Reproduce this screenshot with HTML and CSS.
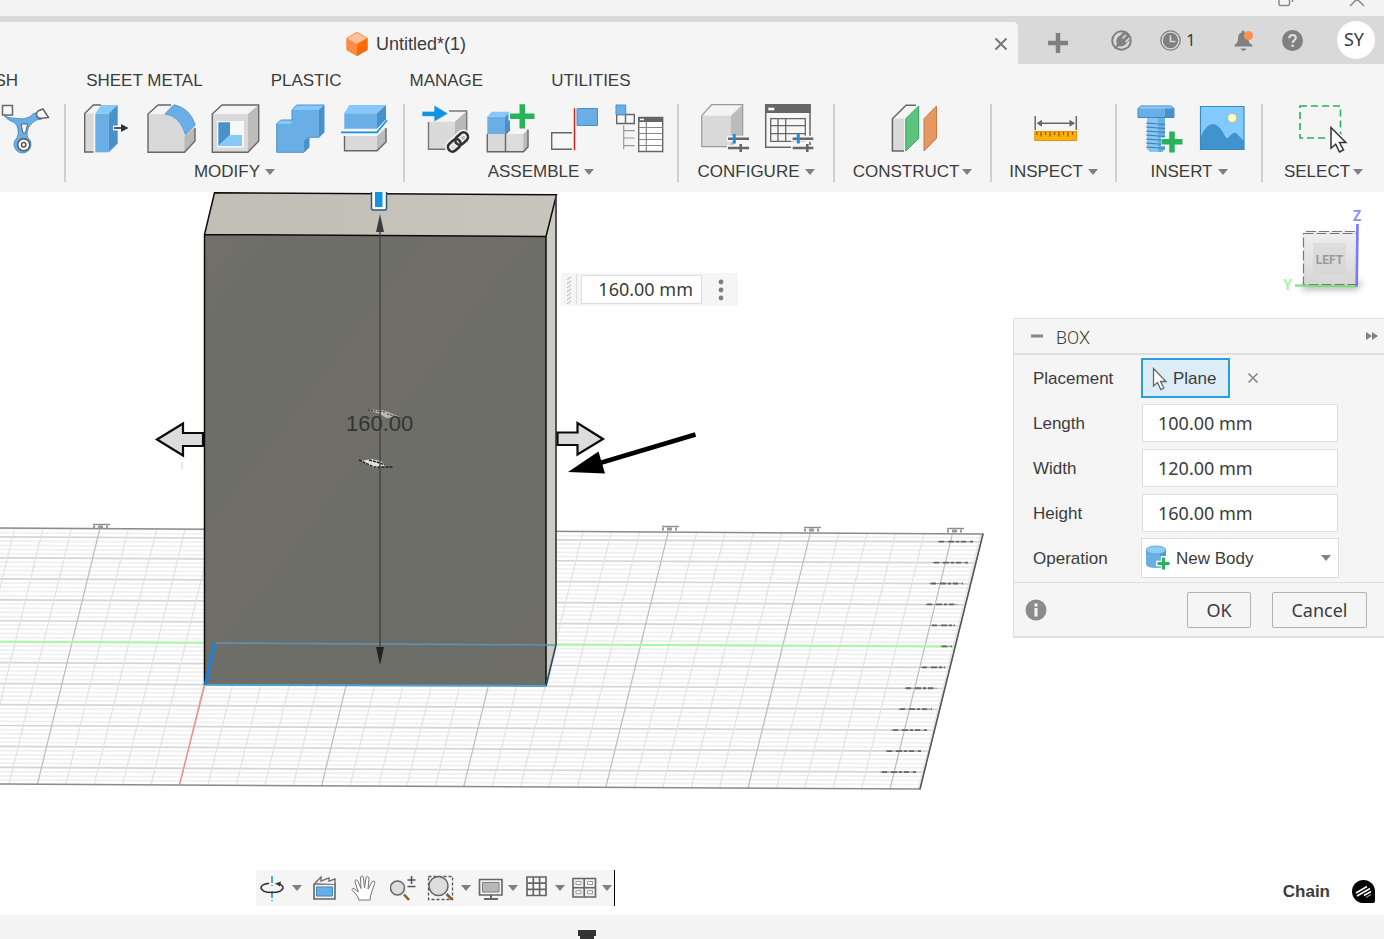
FILE: index.html
```html
<!DOCTYPE html>
<html lang="en">
<head>
<meta charset="utf-8">
<title>Untitled*(1)</title>
<link rel="stylesheet" href="styles.css">
</head>
<body>
<header class="titlebar">
  <button class="win-btn" aria-label="Restore"><svg width="18" height="8" viewBox="0 0 18 8"><path d="M2 0v4q0 1.500 1.500 1.500h7.500q1.500 0 1.500-1.500V0M15.500 0v2" fill="none" stroke="#8a8a8a" stroke-width="1.500"/></svg></button>
  <button class="win-btn" aria-label="Close window"><svg width="18" height="8" viewBox="0 0 18 8"><path d="M2 6 9-1 16 6" fill="none" stroke="#8a8a8a" stroke-width="1.500"/></svg></button>
</header>

<div class="tabstrip">
  <div class="doc-tab">
    <svg width="22" height="24" viewBox="0 0 22 24"><path d="M11 0 21.500 6v12L11 24 .5 18V6z" fill="#ff8b45"/><path d="M11 0 21.500 6 11 12 .5 6z" fill="#ffc199"/><path d="M21.500 6v12L11 24V12z" fill="#ff6b00"/><path d="M11 .5 21 6v12l-10 5.500L1 18V6z" fill="none" stroke="#d9793f" stroke-opacity=".5"/></svg>
    <span class="doc-title">Untitled*(1)</span>
    <button class="tab-close" aria-label="Close tab"><svg width="14" height="14" viewBox="0 0 14 14"><path d="M1.500 1.500l11 11M12.500 1.500l-11 11" stroke="#777" stroke-width="2"/></svg></button>
  </div>
  <div class="strip-tools">
    <button class="new-tab" aria-label="New tab"><svg width="20" height="20" viewBox="0 0 20 20"><path d="M10 0v20M0 10h20" stroke="#808080" stroke-width="4.500"/></svg></button>
    <button aria-label="Extensions"><svg width="21" height="21" viewBox="0 0 21 21"><path d="M4 17.300A9.300 9.300 0 1 1 17 17.300Q10.500 22 4 17.300" fill="none" stroke="#808080" stroke-width="2"/><path d="M3 18 6 14.500Q4 10 7.500 6.500L10 4.500 17 11.500l-2.500 3q-3.500 3-7 1.500L5 19z" fill="#808080"/><path d="M10 4.500Q14-1 18 4t-1 7.500z" fill="#808080"/><path d="M11.500 8.500 15 5M14.500 12l4-4" stroke="#d9d9d9" stroke-width="1.700"/></svg></button>
    <button class="jobs" aria-label="Job status"><svg width="21" height="21" viewBox="0 0 21 21"><circle cx="10.500" cy="10.500" r="9.700" fill="none" stroke="#808080" stroke-width="1.300"/><circle cx="10.500" cy="10.500" r="7.700" fill="#808080"/><path d="M10.500 5.500v6h5" fill="none" stroke="#d9d9d9" stroke-width="1.600"/></svg><span>1</span></button>
    <button aria-label="Notifications"><svg width="20" height="21" viewBox="0 0 20 21"><path d="M9 .5q1.500 0 1.500 2 4 1.500 4 6.500 0 4.500 4 6v1.500H.5V15q3.500-2 3.500-6.500Q4 3.500 7.500 2.500 7.500.5 9 .5M6.500 18.500h6q-1 2.300-3 2.300t-3-2.300" fill="#808080"/><circle cx="14.500" cy="5.500" r="4.500" fill="#ff9150"/></svg></button>
    <button aria-label="Help"><svg width="21" height="21" viewBox="0 0 21 21"><circle cx="10.500" cy="10.500" r="10.500" fill="#808080"/><path d="M7.200 8.200q.2-3.200 3.400-3.200 3.200.1 3.200 2.800 0 1.500-1.600 2.500-1.500 1-1.500 2.700" fill="none" stroke="#e2e2e2" stroke-width="2"/><circle cx="10.600" cy="15.800" r="1.300" fill="#e2e2e2"/></svg></button>
    <button class="avatar">SY</button>
  </div>
</div>

<div class="ribbon">
  <nav class="ribbon-tabs">
    <a href="#mesh">MESH</a><a href="#sheet">SHEET METAL</a><a href="#plastic">PLASTIC</a><a href="#manage">MANAGE</a><a href="#utilities">UTILITIES</a>
  </nav>
  <div class="ribbon-groups">
    <section class="group group-first">
      <div class="icons">
        <button aria-label="Generative"><svg class="ico" viewBox="0 0 48 50"><path d="M3 8q1 5 8 6 8 .5 12 1 7-1 10-5l5-2 4 7q-6 0-10 4-5 5-5 10 0 3 1 5a8.500 8.500 0 1 1-11 0q2-4 1-9-1-6-7-8-7-3-8-9z" fill="#69aee5" stroke="#4d94cb"/><path d="M21 20h6.500l-2 9h-2.500z" fill="#f5f5f5" stroke="#666"/><path d="M2.500 1.500h10v9.500h-10z" fill="#f7f7f7" stroke="#666" stroke-width="1.500"/><path d="m43 5 5.500 8.500-6 .7q-5 .8-6-3-.5-2.700 1.500-4.200z" fill="#f7f7f7" stroke="#666" stroke-width="1.500"/><circle cx="23.700" cy="40.700" r="6" fill="#fff" stroke="#555" stroke-width="1.500"/><circle cx="23.700" cy="40.700" r="2.200" fill="#fff" stroke="#555" stroke-width="1.500"/></svg></button>
      </div>
    </section>
    <section class="group">
      <div class="icons">
        <button aria-label="Press Pull"><svg class="ico" viewBox="0 0 48 50"><path d="M1.700 48V9.500L10.300 1H18l-7.500 8.500V48z" fill="#d9d9d9"/><path d="M1.700 9.500 10.300 1H18l-7.500 8.500z" fill="#f3f3f3"/><path d="M10.500 48H1.700V9.500L10.300 1H18" fill="none" stroke="#666" stroke-width="1.400"/><path d="M12.300 9.500h13.400v38.800H12.300z" fill="#69aee5"/><path d="M12.300 9.500 18.300 1h16.400l-9 8.500z" fill="#86c8fa"/><path d="m25.700 9.500 9-8.500v38.500l-9 8.800z" fill="#4891cb"/><path d="M30 24h8" stroke="#f5f5f5" stroke-width="5"/><path d="M31 24h9" stroke="#333" stroke-width="1.600"/><path d="m38 20 7.500 4-7.500 4z" fill="#333"/></svg></button>
        <button aria-label="Fillet"><svg class="ico" viewBox="0 0 48 50"><path d="M1 48.300V10L11 1h15l-9 9q16 2 20.500 21L48 23v13.500L37.500 48.300z" fill="#d9d9d9"/><path d="M1 10 11 1h14l-8.500 9z" fill="#f4f4f4"/><path d="m37.500 32 10.500-9v13.500L37.500 48.300z" fill="#b9b9b9"/><path d="M24 1H11L1 10v38.300h36.500L48 37V24" fill="none" stroke="#666" stroke-width="1.400"/><path d="M18 10 27 .7Q43 4 48.300 21l-10 9.500Q33 12 18 10z" fill="#69aee5" stroke="#4d94cb" stroke-width=".8"/></svg></button>
        <button aria-label="Shell"><svg class="ico" viewBox="0 0 48 50"><path d="M1.300 10 11 1h36.700v36L37 48.300H1.300z" fill="#d9d9d9"/><path d="M1.300 10 11 1h36.700L37 10z" fill="#f4f4f4"/><path d="m37 10 10.700-9v36L37 48.300z" fill="#bcbcbc"/><path d="M1.300 10 11 1h36.700v36L37 48.300H1.300z" fill="none" stroke="#666" stroke-width="1.400"/><path d="M6 17h27v26.500H6z" fill="#f8f8f8"/><path d="M7.300 18.300H19V31L7.300 42z" fill="#4891cb"/><path d="M7.300 42 19 31h12v11z" fill="#86c8fa"/></svg></button>
        <button aria-label="Combine"><svg class="ico" viewBox="0 0 48 50"><path d="M1.700 48.300V20l4-4H17V6l4.700-5H49v27.300l-5 5H34v10l-5 5z" fill="#69aee5"/><path d="m1.700 20 4-4H17l-1 4zM17 6l4.700-5H49l-5 5z" fill="#86c8fa"/><path d="m44 6 5-5v27.300l-5 5zM29 37l5-4v10.300l-5 5z" fill="#4891cb"/><path d="M1.700 48.300V20l4-4H17V6l4.700-5H49v27.300l-5 5H34v10l-5 5z" fill="none" stroke="#4d94cb"/></svg></button>
        <button aria-label="Split Body"><svg class="ico" viewBox="0 0 48 50"><path d="M5.300 9.300H38v15.400H5.300z" fill="#69aee5"/><path d="m5.300 9.300 5-8.300H47l-9 8.300z" fill="#86c8fa"/><path d="m38 9.300 9-8.300v14.300l-9 9.400z" fill="#4891cb"/><path d="M5.300 32H38v15H5.300z" fill="#d9d9d9"/><path d="m38 32 9-8.500V38l-9 9z" fill="#bbb"/><path d="M5.500 32v14.800H38l9-8.800V24" fill="none" stroke="#666" stroke-width="1.400"/><path d="M2 28.300h36l10-12" fill="none" stroke="#1493e2" stroke-width="1.700"/></svg></button>
      </div>
      <button class="group-label">MODIFY<i class="caret"></i></button>
    </section>
    <section class="group">
      <div class="icons">
        <button aria-label="Insert Component"><svg class="ico" viewBox="0 0 48 50"><path d="M7.500 17.700 18 7h28v27.500L34 45.300H7.500z" fill="#dadada"/><path d="M7.500 17.700 18 7h28L34 17.700z" fill="#f4f4f4"/><path d="m34 17.700 12-10.700v27.500L34 45.300z" fill="#b8b8b8"/><path d="M7.500 18v27.300H30M28 7h17.700v21" fill="none" stroke="#777" stroke-width="1.400"/><path d="M1 7.300h12V1l14.300 8.500L13 18v-5.500H1z" fill="#1493e2" stroke="#f5f5f5" stroke-width=".7"/><g fill="none" stroke="#f5f5f5" stroke-width="6"><rect x="34" y="30" width="14" height="9.500" rx="4.700" transform="rotate(-43 41 35)"/><rect x="26" y="37" width="14" height="9.500" rx="4.700" transform="rotate(-43 33 41)"/></g><g fill="none" stroke="#333" stroke-width="2.700"><rect x="34" y="30" width="14" height="9" rx="4.500" transform="rotate(-43 41 35)"/><rect x="26" y="37" width="14" height="9" rx="4.500" transform="rotate(-43 33 41)"/></g></svg></button>
        <button aria-label="New Component"><svg class="ico" viewBox="0 0 48 50"><path d="M2.300 30H20v17.700H2.300z" fill="#d9d9d9"/><path d="M20.700 30 25 25.300h18V43l-4.700 4.700H20.700z" fill="#dcdcdc"/><path d="m20.700 30 4.300-4.700h18L38.300 30z" fill="#f5f5f5"/><path d="m38.300 30 4.700-4.700V43l-4.700 4.700z" fill="#bbb"/><path d="M2.300 30v17.700h36L43 43V25.500M20.500 30v17.700M20.500 30l4.500-4.500" fill="none" stroke="#666" stroke-width="1.400"/><path d="M2.300 12.700H20V30H2.300z" fill="#69aee5"/><path d="m2.300 12.700 4.400-5H25l-5 5z" fill="#86c8fa"/><path d="m20 12.700 5-5V25l-5 5z" fill="#4891cb"/><path d="M37.300-1v27M23.500 12.500h27" stroke="#f5f5f5" stroke-width="8"/><path d="M37.300.3v24.300M25 12.300h24.500" stroke="#27b35a" stroke-width="5.600"/></svg></button>
        <button aria-label="Joint"><svg class="ico" viewBox="0 0 48 50"><path d="M23 28.700H2.700v16.600H23" fill="#f7f7f7" stroke="#666" stroke-width="1.400"/><path d="M25.500 4.300v42" stroke="#cf2222" stroke-width="1.500"/><path d="M28 4.500h20.500v17H28z" fill="#69aee5" stroke="#4c91c6"/></svg></button>
        <button aria-label="Bill of Materials"><svg class="ico" viewBox="0 0 48 50"><path d="M3.700 10.500h17.600v9H3.700zM12.500 10.500v9" fill="#f7f7f7" stroke="#666" stroke-width="1.400"/><path d="M3 1h9.700v9.700H3z" fill="#69aee5" stroke="#4c91c6"/><path d="M10.700 21.300v24M10.700 26.700h11M10.700 34h11M10.700 41.700h11" stroke="#999" stroke-width="1.200" fill="none"/><path d="M25.700 13.500h24v34h-24z" fill="#fff" stroke="#666" stroke-width="1.400"/><path d="M25.700 13h24v5h-24z" fill="#666"/><path d="M27 15.500h4" stroke="#fff" stroke-width="1.500"/><path d="M33.300 18v29M26 23.500h24M26 29.500h24M26 35.500h24M26 41.500h24" stroke="#888" stroke-width="1.200"/></svg></button>
      </div>
      <button class="group-label">ASSEMBLE<i class="caret"></i></button>
    </section>
    <section class="group">
      <div class="icons">
        <button aria-label="Configure"><svg class="ico" viewBox="0 0 48 50"><path d="M1.700 11.700 11.700.7h31v31L31 42.700H1.700z" fill="#d9d9d9"/><path d="m1.700 11.700 10-11h31L31 11.700z" fill="#f3f3f3"/><path d="m31 11.700 11.700-11v31L31 42.700z" fill="#bcbcbc"/><path d="m1.700 11.700 10-11h31v31M1.700 11.700v31H30" fill="none" stroke="#999" stroke-width="1.200"/><path d="M27 34.700h22M27 44h22" stroke="#f5f5f5" stroke-width="6"/><path d="M28 34.700h21M28 44h21" stroke="#666" stroke-width="2.600"/><path d="M34.300 30v9.500" stroke="#1493e2" stroke-width="3"/><path d="M40.700 40v8" stroke="#666" stroke-width="2.600"/></svg></button>
        <button aria-label="Configuration Table"><svg class="ico" viewBox="0 0 48 50"><path d="M1.700.7H46v42.600H1.700z" fill="#f7f7f7" stroke="#666" stroke-width="1.500"/><path d="M1 0h45.500v9H1z" fill="#666"/><path d="M4.300 3.700h6v2.600h-6z" fill="#fff"/><path d="M6.700 14.700h34.600v22.600H6.700zM14 14.700v22.600M21.700 14.700v22.600M6.700 21.700h34.600M6.700 29.700h34.600" fill="none" stroke="#666" stroke-width="1.300"/><path d="M27 34.700h23M27 44h23" stroke="#f5f5f5" stroke-width="6"/><path d="M28.700 34.700h20.600M28.700 44h20.600" stroke="#666" stroke-width="2.600"/><path d="M34.300 30v9.500" stroke="#1493e2" stroke-width="3"/><path d="M43.300 40v8" stroke="#666" stroke-width="2.600"/></svg></button>
      </div>
      <button class="group-label">CONFIGURE<i class="caret"></i></button>
    </section>
    <section class="group">
      <div class="icons">
        <button aria-label="Offset Plane"><svg class="ico" viewBox="0 0 48 50"><path d="M3.400 14.700 17 1.300h11L15 14.700V47H3.400z" fill="#f4f4f4"/><path d="M3.400 14.700H15V47H3.400z" fill="#d9d9d9"/><path d="M15 47H3.400V14.700L17 1.300h10" fill="none" stroke="#666" stroke-width="1.500"/><path d="M16.800 14.700 29.700 2v32.300L16.800 47z" fill="#5bc580" stroke="#3a9d5f"/><path d="M35 14.700 47.500 2v32.300L35 47z" fill="#e79862" stroke="#c37a45"/></svg></button>
      </div>
      <button class="group-label group-label--tight">CONSTRUCT<i class="caret"></i></button>
    </section>
    <section class="group">
      <div class="icons">
        <button aria-label="Measure"><svg class="ico" viewBox="0 0 48 50"><path d="M5.200 12v14M46.300 12v14M8 19.300h36" stroke="#666" stroke-width="1.500"/><path d="m6.500 19.300 5.500-3.500v7zM45 19.300l-5.500-3.500v7z" fill="#666"/><path d="M4.700 27.500h42v9h-42z" fill="#ffb000" stroke="#dd9412"/><path d="M7 28v3M11 28v4.500M15.500 28v3M20 28v4.500M24.500 28v3M29 28v4.500M33.500 28v3M38 28v4.500M42.500 28v3" stroke="#7d5a10" stroke-width="1.200"/></svg></button>
      </div>
      <button class="group-label">INSPECT<i class="caret"></i></button>
    </section>
    <section class="group">
      <div class="icons">
        <button aria-label="Insert Fastener"><svg class="ico" viewBox="0 0 48 50"><path d="M14 12h18v33l-3 3H17l-3-3z" fill="#86c4f2"/><path d="M25 12h7v33l-3 3h-4z" fill="#6baee0"/><path d="m13 19 19 1.500M13 23l19 1.500M13 27l19 1.500M13 31l19 1.500M13 35l19 1.500M13 39l19 1.500M13 43l19 1.500" stroke="#397fb3" stroke-width="1.200"/><path d="M5 4.500 8 2h30l3 2.500v9H5z" fill="#69aee5" stroke="#3e87be"/><path d="M32 3h6l2.500 2v8H32z" fill="#4891cb"/><path d="M6 4.500 8 2.500h30l2 2z" fill="#8accfa"/><path d="M39 26v23M28 37.700h22" stroke="#f5f5f5" stroke-width="8.500"/><path d="M39 27.500v21M28.500 37.700h21" stroke="#27b35a" stroke-width="5.500"/></svg></button>
        <button aria-label="Canvas"><svg class="ico" viewBox="0 0 48 50"><path d="M3.500 2.500h43.500v43h-43.500z" fill="#82cafd"/><path d="M3.500 33Q9 20 16 20q6 0 12 12 2 4 4 1 6-8 10-1l5 5v8.500h-43.500z" fill="#4193cf"/><circle cx="35.200" cy="14" r="4.700" fill="#fffcc5" stroke="#9dbb9a"/><path d="M3.500 2.500h43.500v43h-43.500z" fill="none" stroke="#3a8ac4" stroke-width="1.200"/></svg></button>
      </div>
      <button class="group-label">INSERT<i class="caret"></i></button>
    </section>
    <section class="group">
      <div class="icons">
        <button aria-label="Select"><svg class="ico" viewBox="0 0 48 50"><path d="M0 2h40.500v32H0z" fill="none" stroke="#27b35a" stroke-width="1.600" stroke-dasharray="7 4"/><path d="M31 23.500v20.700l4.700-4 3.800 8.300 4.200-2-4-8h6.300z" fill="#fff" stroke="#f5f5f5" stroke-width="4"/><path d="M31 23.500v20.700l4.700-4 3.800 7.800 4-2-4-7.500h6.300z" fill="#fff" stroke="#333" stroke-width="1.500"/></svg></button>
      </div>
      <button class="group-label group-label--tight">SELECT<i class="caret"></i></button>
    </section>
  </div>
</div>

<main class="stage">
  <svg class="scene" role="img" aria-label="Box preview on the construction grid">
    <defs>
      <linearGradient id="front" x1="0" y1="0" x2="1" y2="1"><stop offset="0" stop-color="#706f69"/><stop offset=".2" stop-color="#6d6e68"/><stop offset=".45" stop-color="#706e69"/><stop offset=".5" stop-color="#6d6e67"/><stop offset=".8" stop-color="#6c6d67"/><stop offset="1" stop-color="#6f6d68"/></linearGradient>
      <linearGradient id="top" x1="0" x2="1"><stop offset="0" stop-color="#c1beb5"/><stop offset="1" stop-color="#c8c5bd"/></linearGradient>
      <linearGradient id="cube" x1="0" y1="0" x2="0" y2="1"><stop offset="0" stop-color="#efefef"/><stop offset="1" stop-color="#d6d6d6"/></linearGradient>
      <filter id="soft" x="-20%" y="-100%" width="140%" height="300%"><feGaussianBlur stdDeviation="3"/></filter>
      <clipPath id="plane"><path d="M-1 528 983 534 920 789-1 784z"/></clipPath>
    </defs>
    <g transform="translate(0 -192)">
      <g id="grid" clip-path="url(#plane)"></g>
      <path d="M0 528 983 534 920 789 0 784" fill="none" stroke="#8b8b8b" stroke-width="1.500"/>
      <path d="M983 534 920 789" stroke="#555" stroke-width="1.300"/>
      <path d="M0 641.700 953 646.500" stroke="#a5fca0" stroke-width="2"/>
      <path d="M204.500 686 179.700 784" stroke="#fb8b85" stroke-width="1.300"/>
      <g id="ticks"></g>

      <path d="M204.500 234.500 214.500 192.800 556.500 194.700 546 236.500z" fill="url(#top)"/>
      <path d="M546 236.500 556.500 194.700V645L546 686z" fill="#cccbc4"/>
      <path d="M204.500 234.500 546 236.500V686L204.500 685z" fill="url(#front)"/>
      <path d="M204.500 685V234.500L214.500 192.800 556.500 194.700 546 236.500 204.500 234.500M546 236.500V686" fill="none" stroke="#0c0c0c" stroke-width="1.500"/>
      <path d="M556 195V645" stroke="#3c3f3d" stroke-width="1.700"/>
      <path d="M214.500 643 556 645" stroke="#6094b4" stroke-width="1.300"/>
      <path d="M546 686 556 645" stroke="#23506e" stroke-width="1.700"/>
      <path d="M204.500 684.700 546 686" stroke="#4f9fce" stroke-width="2"/>
      <path d="M205.500 684.500 214.500 643" stroke="#237fd6" stroke-width="3.500"/>

      <path d="M369 410q12-1 19 2l12 5-14 1-6-4z" fill="#b9b9b7"/><path d="M368 410 385 412M387 414l14 4" stroke="#333" stroke-dasharray="2 1"/>
      <path d="M361 461l10-2 10 2 5 5-12 2z" fill="#dededc"/><path d="M359 460l15 7h19M369 460l8 2 8 3" fill="none" stroke="#222" stroke-width="1.500" stroke-dasharray="3 1"/>
      <path d="M380 225V655" stroke="#42433f" stroke-width="1.400"/>
      <path d="M380 214l4 18h-8z" fill="#3b3c39"/><path d="M380 665l4-18h-8z" fill="#222"/>
      <text class="dim" x="346" y="431">160.00</text>
      <path d="M371.500 190v18.500q0 1.500 1.500 1.500h12q1.500 0 1.500-1.500V190z" fill="#fff" stroke="#2c5878" stroke-width="1.500"/>
      <path d="M375 190h7.500v17H375z" fill="#1493e2"/>

      <path d="M157 439.500 183 423.500v9.500h20v13H183v9.500z" fill="#dcdcdc" stroke="#0b0b0b" stroke-width="2.200"/>
      <path d="M603 439 577.500 423v9.500h-20V445h20v9.500z" fill="#dcdcdc" stroke="#0b0b0b" stroke-width="2.200"/>
      <path d="M182 462v7" stroke="#e2e8ee" stroke-width="2"/>
      <path d="M695.500 434.500 600 463" stroke="#000" stroke-width="4.500"/><path d="M568 472 598.500 451.500 605 473.500z" fill="#000"/>
    </g>
  </svg>

  <form class="float-input">
    <svg width="8" height="28" viewBox="0 0 8 28"><path d="M2 4l4-3M2 8l4-3M2 12l4-3M2 16l4-3M2 20l4-3M2 24l4-3M2 28l4-3" stroke="#b0b0b0"/></svg>
    <span class="float-sep"></span>
    <input aria-label="Height dimension" value="160.00 mm">
    <button type="button" aria-label="More"><svg width="6" height="22" viewBox="0 0 6 22"><g fill="#808080"><circle cx="3" cy="3" r="2.400"/><circle cx="3" cy="11" r="2.400"/><circle cx="3" cy="19" r="2.400"/></g></svg></button>
  </form>

  <svg class="viewcube" width="90" height="96" viewBox="1280 204 90 96" role="img" aria-label="View cube">
    <path d="M1306 282h58l-8 8h-56z" fill="#777" opacity=".5" filter="url(#soft)"/>
    <path d="M1303.500 233 1307 231h50v54h-53.500z" fill="url(#cube)"/>
    <path d="M1313 243h33v32h-33z" fill="#d3d3d3" opacity=".55"/>
    <path d="M1303.500 233.500h53.500v51h-53.500zM1306 231.500h50" fill="none" stroke="#777" stroke-width="1.200" stroke-dasharray="10 3"/>
    <path d="M1295 285.500 1357 286.500" stroke="#78de78" stroke-width="2"/>
    <path d="M1357.500 224 1356.700 286.500" stroke="#7878fb" stroke-width="2.600"/>
    <text class="cube-face" x="1329.500" y="264">LEFT</text>
    <text class="axis axis-z" x="1357" y="221">Z</text>
    <text class="axis axis-y" x="1287.500" y="290">Y</text>
  </svg>

  <form class="panel">
    <header class="panel-head">
      <button type="button" aria-label="Collapse"><svg width="12" height="4" viewBox="0 0 12 4"><path d="M0 2h12" stroke="#858585" stroke-width="3"/></svg></button>
      <h2>BOX</h2>
      <button type="button" class="panel-expand" aria-label="Expand"><svg width="12" height="10" viewBox="0 0 12 10"><path d="M0 1l6 4-6 4zM6 1l6 4-6 4z" fill="#808080"/></svg></button>
    </header>
    <div class="panel-body">
      <div class="row"><label for="plane-btn">Placement</label>
        <div class="placement">
          <button type="button" id="plane-btn" class="plane"><svg width="16" height="24" viewBox="0 0 16 24"><path d="M1.500 1.500v17.500l4-3.500 3.300 7 3-1.500-3.300-6.500H14z" fill="#fff" stroke="#666" stroke-width="1.300"/></svg>Plane</button>
          <button type="button" aria-label="Clear placement"><svg width="12" height="12" viewBox="0 0 12 12"><path d="M1.500 1.500l9 9M10.500 1.500l-9 9" stroke="#808080" stroke-width="1.500"/></svg></button>
        </div>
      </div>
      <div class="row"><label for="len">Length</label><input id="len" value="100.00 mm"></div>
      <div class="row"><label for="wid">Width</label><input id="wid" value="120.00 mm"></div>
      <div class="row"><label for="hei">Height</label><input id="hei" value="160.00 mm"></div>
      <div class="row"><label for="op">Operation</label>
        <div class="select-wrap">
          <select id="op"><option>New Body</option></select>
          <svg class="select-icon" width="26" height="26" viewBox="0 0 26 26"><path d="M1 5v14q0 4 10 4t10-4V5z" fill="#69aee5"/><path d="M15 5h6v14q0 3-6 4z" fill="#5299d2"/><ellipse cx="11" cy="5" rx="10" ry="4" fill="#8bcbfa" stroke="#5d9ccc" stroke-width=".8"/><path d="M18.500 11v14M11 18.500h14" stroke="#fff" stroke-width="5.500"/><path d="M18.500 12.500v12M12.500 18.500h12" stroke="#27b35a" stroke-width="3"/></svg>
          <i class="caret select-caret"></i>
        </div>
      </div>
    </div>
    <footer class="panel-foot">
      <button type="button" class="info" aria-label="Information"><svg width="22" height="22" viewBox="0 0 22 22"><circle cx="11" cy="11" r="10.500" fill="#8c8c8c"/><path d="M11 9v8.500M11 4.500v3" stroke="#f5f5f5" stroke-width="3"/></svg></button>
      <button type="button" class="btn btn-ok">OK</button>
      <button type="button" class="btn btn-cancel">Cancel</button>
    </footer>
  </form>

  <div class="navbar">
    <button class="tool tool--menu" aria-label="Orbit"><svg width="26" height="26" viewBox="0 0 26 26"><path d="M13 1v10M13 16v10" stroke="#1493e2" stroke-width="1.500" stroke-dasharray="7 2"/><path d="M10 8.300Q2 9.500 2 13q1 4.500 11 4.500t11-4.500q0-3-5-4.500" fill="none" stroke="#333" stroke-width="1.600"/><path d="m16 8.500 6-2-1 5z" fill="#333"/></svg><i class="caret"></i></button>
    <button class="tool tool--plain" aria-label="Look At"><svg width="26" height="26" viewBox="0 0 26 26"><path d="M2 9h21v15H2z" fill="#eee" stroke="#666" stroke-width="1.600"/><path d="M4.500 12h16v9h-16z" fill="#69aee5" stroke="#3d8cc7"/><path d="M3 8 9 2v4l8-3v3l6-2v5" fill="#eee" stroke="#666" stroke-width="1.300"/></svg></button>
    <button class="tool tool--plain" aria-label="Pan"><svg width="26" height="26" viewBox="0 0 26 26"><path d="M8 25q-1-4-4-7L.8 14.500q1-2 3-.5l3.500 3L4 7q-.2-2 1-2.200T7 6.500l3 7L9.500 3q.2-2 1.500-2t1.500 2l1 10L15 3q.5-2 1.800-1.500T18 4l-1 10 4-7q1-1.500 2.200-.8t.5 2.300L21 16l-1.500 5-.5 4z" fill="#fff" stroke="#777"/></svg></button>
    <button class="tool tool--plain" aria-label="Zoom"><svg width="26" height="26" viewBox="0 0 26 26"><circle cx="7.500" cy="13" r="7" fill="#ddd" stroke="#666" stroke-width="1.500"/><path d="M14 19.500 19 25" stroke="#8b5e2e" stroke-width="2.600"/><path d="M21.500 1v8M17.500 5h8M17.500 11.500h8" stroke="#555" stroke-width="1.600"/></svg></button>
    <button class="tool tool--menu" aria-label="Fit"><svg width="28" height="26" viewBox="0 0 28 26"><path d="M2.500 1.500h24v23h-24z" fill="none" stroke="#555" stroke-width="1.300" stroke-dasharray="3 2"/><circle cx="12.500" cy="11" r="9.500" fill="#ddd" stroke="#666" stroke-width="1.500"/><path d="M20.500 19 26 24.500" stroke="#8b5e2e" stroke-width="2.600"/></svg><i class="caret"></i></button>
    <button class="tool tool--menu tool--tight" aria-label="Display Settings"><svg width="26" height="26" viewBox="0 0 26 26"><path d="M1.500 4.500h22.500v15.500h-22.500z" fill="#f1f1f1" stroke="#666" stroke-width="1.600"/><path d="M4.500 7.500h16.500v9.500H4.500z" fill="#b8b8b8" stroke="#808080"/><path d="M13 20v3M6 24h14" stroke="#666" stroke-width="2"/></svg><i class="caret"></i></button>
    <button class="tool tool--menu tool--tight" aria-label="Grid and Snaps"><svg width="26" height="26" viewBox="0 0 26 26"><path d="M2 2h19v18.500H2zM8.300 2v18.500M14.600 2v18.500M2 8.200h19M2 14.300h19" fill="#f7f7f7" stroke="#666" stroke-width="1.700"/></svg><i class="caret"></i></button>
    <button class="tool tool--menu tool--tight" aria-label="Viewports"><svg width="26" height="26" viewBox="0 0 26 26"><path d="M1 3.500h22.500v18.500H1zM12.200 3.500V22M1 12.700h22.500" fill="#eee" stroke="#666" stroke-width="1.600"/><path d="M4 6.500h5v3H4zM15.500 6.500h5v3h-5zM4 15.700h5v3H4zM15.500 15.700h5v3h-5z" fill="#fff" stroke="#999"/></svg><i class="caret"></i></button>
  </div>

  <div class="status">
    <span>Chain</span>
    <svg width="23" height="23" viewBox="0 0 23 23"><path d="M11.500 0A11.500 11.500 0 0 1 23 11.500V21q0 2-2 2h-9.500a11.500 11.500 0 0 1 0-23z" fill="#050505"/><path d="M4 13 15 6.500M5 16 18 8.500M12 15.500l7-4" stroke="#fff" stroke-width="1.500"/><path d="M14 17.500l5-3" stroke="#999" stroke-width="1.200"/></svg>
  </div>
</main>

<footer class="timeline">
  <svg width="18" height="10" viewBox="0 0 18 10"><path d="M0 1h18v6h-2v3H2V7H0z" fill="#333"/></svg>
</footer>
<script src="scene.js"></script>
</body>
</html>
```
FILE: styles.css
```css
* { box-sizing: border-box; }
body {
  margin: 0;
  min-height: 100vh;
  display: flex;
  flex-direction: column;
  overflow-x: hidden;
  font: 17px/20px "Liberation Sans", Arial, sans-serif;
  color: #3c3c3c;
  background: #fff;
}
button {
  display: flex;
  align-items: center;
  padding: 0;
  border: 0;
  background: none;
  font: inherit;
  color: inherit;
}
svg { display: block; flex: none; }
.caret {
  flex: none;
  width: 0;
  border: 5px solid transparent;
  border-top: 6px solid #808080;
  border-bottom: 0;
}

/* window and document tabs */
.titlebar {
  height: 16px;
  display: flex;
  justify-content: flex-end;
  align-items: flex-start;
  gap: 53px;
  padding-right: 18px;
  background: #f3f3f3;
}
.tabstrip {
  display: flex;
  align-items: stretch;
  height: 48px;
  background: #d9d9d9;
}
.doc-tab {
  flex: 1;
  display: flex;
  align-items: center;
  margin-top: 6px;
  padding: 2px 10px 0 25%;
  gap: 8px;
  background: #f5f5f5;
  border-top-right-radius: 5px;
}
.doc-title { font-size: 18px; }
.tab-close { margin-left: auto; }
.strip-tools {
  display: flex;
  align-items: center;
  gap: 28px;
  padding: 0 9px 0 30px;
}
.new-tab { margin: 6px 15px 0 0; }
.jobs { width: 46px; gap: 5px; font-family: "Noto Sans", sans-serif; }
.avatar {
  justify-content: center;
  width: 38px;
  height: 38px;
  margin-left: 6px;
  padding: 0 4px 2px 0;
  border-radius: 50%;
  background: #fff;
  font: 18px/20px "Noto Sans", sans-serif;
}

/* ribbon */
.ribbon { background: #f5f5f5; overflow: hidden; }
.ribbon-tabs {
  display: flex;
  gap: 68px;
  margin-left: -31px;
  padding: 7px 0 13px;
}
.ribbon-tabs a { color: inherit; text-decoration: none; white-space: nowrap; }
.ribbon-groups {
  display: grid;
  grid-template-columns: 66fr 339fr 274fr 156fr 157fr 125fr 146fr 121fr;
  height: 76px;
  margin-bottom: 12px;
}
.group {
  display: flex;
  flex-direction: column;
  align-items: center;
  min-width: 0;
  border-right: 2px solid #d0d0d0;
}
.group:last-child { border-right: 0; }
.group-first { align-items: flex-start; }
.icons { display: flex; gap: 16px; }
.ico { width: 48px; height: 50px; overflow: visible; }
.group-label { gap: 5px; margin-top: 8px; }
.group-label--tight { gap: 3px; }

/* modelling canvas */
.stage { position: relative; flex: 1; min-height: 560px; overflow: hidden; }
.scene { position: absolute; inset: 0; width: 100%; height: 100%; }
.dim { font-size: 22px; fill: #343532; }
.float-input {
  position: absolute;
  left: 561px;
  top: 81px;
  display: flex;
  align-items: center;
  height: 33px;
  padding: 0 14px 0 4px;
  background: #f5f5f5;
}
.float-sep { width: 1px; height: 31px; margin: 0 4px 0 3px; background: #ddd; }
.float-input input {
  width: 121px;
  height: 29px;
  margin-right: 16px;
  padding: 0 8px 2px;
  text-align: right;
}
input {
  border: 1px solid #dedede;
  background: #fff;
  color: #3c3c3c;
  font: 18px/24px "Noto Sans", sans-serif;
}
.viewcube { position: absolute; right: 14px; top: 12px; overflow: visible; }
.cube-face { font: bold 12px Roboto, sans-serif; fill: #999; text-anchor: middle; }
.axis { font: bold 14px Roboto, sans-serif; text-anchor: middle; }
.axis-z { fill: #8f8ffb; }
.axis-y { fill: #a3f7a3; }

/* box dialog */
.panel {
  position: absolute;
  right: 0;
  top: 126px;
  width: 371px;
  background: #f5f5f5;
  border: 1px solid #dedede;
  border-right: 0;
  border-bottom-width: 2px;
}
.panel-head {
  display: flex;
  align-items: center;
  height: 36px;
  padding: 0 6px 0 17px;
  gap: 13px;
  border-bottom: 2px solid #dedede;
}
.panel-head h2 { margin: 4px 0 0; font: 300 18px/20px Roboto, sans-serif; }
.panel-expand { margin-left: auto; }
.panel-body { padding-bottom: 2px; border-bottom: 1px solid #dedede; }
.row {
  display: grid;
  grid-template-columns: 108px 198px;
  align-items: center;
  height: 45px;
  padding-left: 19px;
}
.row label { padding-top: 2px; }
.row > input { width: 196px; height: 38px; margin-left: 1px; padding: 0 15px; }
.placement { display: flex; align-items: center; gap: 17px; }
.plane {
  height: 40px;
  padding: 2px 12px 0 9px;
  gap: 5px;
  border: 2px solid #2a9ddf;
  background: #dcedf7;
}
.select-wrap { position: relative; }
select {
  display: block;
  appearance: none;
  width: 100%;
  height: 40px;
  padding: 2px 30px 0 34px;
  border: 1px solid #dcdcdc;
  border-radius: 0;
  background: #fff;
  color: inherit;
  font: inherit;
}
.select-icon { position: absolute; left: 4px; top: 7px; pointer-events: none; }
.select-caret { position: absolute; right: 8px; top: 17px; pointer-events: none; }
.panel-foot { display: flex; align-items: center; padding: 9px 17px 8px 11px; gap: 21px; }
.info { margin-right: auto; }
.btn {
  justify-content: center;
  height: 36px;
  border: 1px solid #b3b3b3;
  border-radius: 2px;
  font: 18px/24px "Noto Sans", sans-serif;
}
.btn-ok { width: 64px; }
.btn-cancel { width: 95px; }

/* canvas footer */
.navbar {
  position: absolute;
  left: 256px;
  bottom: 9px;
  display: flex;
  align-items: center;
  height: 36px;
  gap: 7px;
  padding: 0 2px 0 3px;
  background: #f5f5f5;
  border-right: 1px solid #000;
}
.tool--menu { gap: 7px; }
.tool--tight { gap: 4px; }
.tool--plain { padding: 0 3px; }
.status {
  position: absolute;
  right: 9px;
  bottom: 12px;
  display: flex;
  align-items: center;
  gap: 22px;
  font-weight: bold;
}
.timeline {
  display: flex;
  justify-content: flex-start;
  align-items: flex-end;
  height: 24px;
  padding-left: 578px;
  background: #f4f4f4;
}
```
FILE: scene.js
```js
// Draws the construction grid: a sheared plane with minor and major lines.
const NS = "http://www.w3.org/2000/svg";
const grid = document.getElementById("grid");
const ticks = document.getElementById("ticks");

function line(parent, x1, y1, x2, y2, stroke, width, dash) {
  const el = document.createElementNS(NS, "path");
  el.setAttribute("d", `M${x1} ${y1}L${x2} ${y2}`);
  el.setAttribute("stroke", stroke);
  el.setAttribute("stroke-width", width);
  if (dash) el.setAttribute("stroke-dasharray", dash);
  parent.appendChild(el);
}

for (let i = -28; i <= 34; i++) {
  const y = 641.7 + i * 4.19;
  const major = i % 5 === 0;
  line(grid, 0, y, 983, y + 5, major ? "#d4d4d4" : "#efefef", major ? 1.7 : 1.7);
}
for (let i = -4; i <= 36; i++) {
  const x = 100 + i * 28.46;
  const major = i % 5 === 0;
  line(grid, x, 528, x - 64, 790, major ? "#bcbcbc" : "#e2e2e2", 1.2);
}

// Scale labels lie flat on the plane, so only their strokes' edges show.
const labels = [[973, 36], [968, 36], [963, 34], [958, 33], [955, 25], [952, 12],
  [945, 25], [937, 33], [932, 34], [927, 36], [921, 36], [916, 36]];
labels.forEach(([x, w], i) => {
  const y = 541.6 + i * 20.95;
  line(ticks, x - w, y, x, y, "#9a9a9a", 1);
  line(ticks, x - w + 2, y, x, y, "#666", 1.8, "5 4 6 2 3 2");
});
for (const [x, y] of [[101, 526], [670, 528], [812, 529], [955, 530]]) {
  line(ticks, x - 8, y - 1.5, x + 9, y - 1.5, "#8c8c8c", 1.4);
  line(ticks, x - 8, y + 1, x + 7, y + 1, "#999", 3, "2 3 5 3 2 9");
}
```
